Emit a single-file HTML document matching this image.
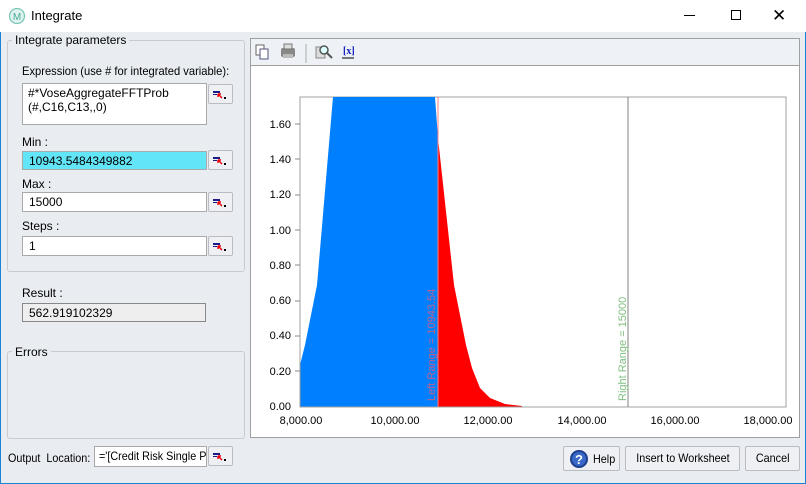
<!DOCTYPE html>
<html><head><meta charset="utf-8"><style>
*{box-sizing:border-box}
body{margin:0;width:806px;height:484px;overflow:hidden;background:#e9edf2;font-family:"Liberation Sans",sans-serif;font-size:12px;color:#000;position:relative}
.a{position:absolute}
.title{left:0;top:0;width:806px;height:32px;background:#fff}
.grp{border:1px solid #c8ccd2;border-radius:3px}
.lg{background:#e9edf2;padding:0 3px}
.inp{background:#fff;border:1px solid #a9a9a9;padding:2px 6px;font-size:12px}
.btn{background:#eef0f3;border:1px solid #b9bdc3;border-radius:2px}
.pb{width:25px;height:20px}
</style></head><body>
<div class="a" style="left:0;top:0;width:1px;height:484px;background:#1883d7"></div>
<div class="a" style="right:0;top:0;width:1px;height:484px;background:#1883d7"></div>
<div class="a" style="left:0;bottom:0;width:806px;height:1px;background:#1883d7"></div>
<div class="a title"></div>
<svg class="a" style="left:8px;top:7px" width="18" height="18"><circle cx="9" cy="9" r="7.5" fill="#dff3f0" stroke="#7cc7b8" stroke-width="1.3"/><text x="9" y="13" font-size="10" text-anchor="middle" fill="#4aa996" font-family="Liberation Sans">M</text></svg>
<div class="a" style="left:31px;top:8px;font-size:13px">Integrate</div>
<div class="a" style="left:684px;top:15px;width:11px;height:1px;background:#000"></div>
<div class="a" style="left:731px;top:10px;width:10px;height:10px;border:1px solid #000"></div>
<div class="a" style="left:772px;top:6px;font-size:17px">✕</div>

<div class="a grp" style="left:7px;top:40px;width:238px;height:232px"></div>
<div class="a lg" style="left:12px;top:33px">Integrate parameters</div>
<div class="a" style="left:22px;top:64px;transform:scaleX(.93);transform-origin:left;white-space:nowrap">Expression (use # for integrated variable):</div>
<div class="a inp" style="left:22px;top:83px;width:185px;height:42px;line-height:14px;padding:2px 5px">#*VoseAggregateFFTProb<br>(#,C16,C13,,0)</div>
<div class="a" style="left:22px;top:135px">Min :</div>
<div class="a inp" style="left:22px;top:151px;width:185px;height:19px;background:#62e6f7">10943.5484349882</div>
<div class="a" style="left:22px;top:177px">Max :</div>
<div class="a inp" style="left:22px;top:192px;width:185px;height:20px">15000</div>
<div class="a" style="left:22px;top:219px">Steps :</div>
<div class="a inp" style="left:22px;top:236px;width:185px;height:20px">1</div>
<div class="a" style="left:22px;top:286px">Result :</div>
<div class="a inp" style="left:22px;top:303px;width:184px;height:19px;background:#eeeeee;border-color:#888">562.919102329</div>
<div class="a grp" style="left:7px;top:351px;width:238px;height:88px"></div>
<div class="a lg" style="left:12px;top:345px">Errors</div>
<div class="a" style="left:8px;top:451px;transform:scaleX(.9);transform-origin:left">Output&nbsp; Location:</div>
<div class="a inp" style="left:94px;top:446px;width:113px;height:21px;padding:2px 4px;white-space:nowrap;overflow:hidden"><span style="display:inline-block;transform:scaleX(.9);transform-origin:left">='[Credit Risk Single P</span></div>

<div class="a btn pb" style="left:208px;top:84px"></div>
<div class="a btn pb" style="left:208px;top:150px"></div>
<div class="a btn pb" style="left:208px;top:192px"></div>
<div class="a btn pb" style="left:208px;top:236px"></div>
<div class="a btn pb" style="left:208px;top:446px"></div>
<svg class="a" style="left:208px;top:0" width="26" height="484">
<g id="ic"><rect x="5" y="91" width="7" height="2" fill="#1a1a8a"/><rect x="5" y="94" width="4" height="1" fill="#1a1a8a"/><path d="M10 94 l4 4 M10 94 v3 M10 94 h3" stroke="#e00" stroke-width="1.4"/><rect x="16" y="97" width="2" height="2" fill="#000"/></g>
<use href="#ic" y="66"/><use href="#ic" y="108"/><use href="#ic" y="152"/><use href="#ic" y="362"/>
</svg>

<div class="a btn" style="left:563px;top:446px;width:57px;height:25px"></div>
<svg class="a" style="left:569px;top:449px" width="20" height="20"><circle cx="10" cy="10" r="9" fill="#1d3f8f"/><circle cx="10" cy="10" r="7" fill="#3a68c6"/><text x="10" y="15" font-size="13" font-weight="bold" fill="#fff" text-anchor="middle" font-family="Liberation Sans">?</text></svg>
<div class="a" style="left:593px;top:452px;transform:scaleX(.9);transform-origin:left">Help</div>
<div class="a btn" style="left:625px;top:446px;width:115px;height:25px;text-align:center;line-height:23px"><span style="display:inline-block;transform:scaleX(.9)">Insert to Worksheet</span></div>
<div class="a btn" style="left:745px;top:446px;width:55px;height:25px;text-align:center;line-height:23px"><span style="display:inline-block;transform:scaleX(.9)">Cancel</span></div>

<div class="a" style="left:250px;top:38px;width:550px;height:400px;border:1px solid #a0a0a0;background:#fff"></div>
<div class="a" style="left:251px;top:39px;width:548px;height:27px;background:#eef1f5;border-bottom:1px solid #a0a0a0"></div>
<svg class="a" style="left:251px;top:39px" width="120" height="27">
<rect x="5" y="6" width="8" height="10" fill="#fff" stroke="#666"/><rect x="9" y="10" width="8" height="10" fill="#fff" stroke="#557"/>
<rect x="30" y="9" width="14" height="9" rx="2" fill="#888"/><rect x="33" y="5" width="8" height="5" fill="#ddd" stroke="#777"/><rect x="32" y="15" width="10" height="4" fill="#bbb"/>
<line x1="55" y1="5" x2="55" y2="24" stroke="#aaa"/>
<rect x="65" y="8" width="9" height="11" fill="#ddd" stroke="#888"/><circle cx="73" cy="11" r="4" fill="#dff" stroke="#555" stroke-width="1.5"/><line x1="76" y1="14" x2="81" y2="19" stroke="#555" stroke-width="2"/>
<text x="92" y="15" font-size="10" font-weight="bold" fill="#1020c0" font-family="Liberation Serif">[x]</text><line x1="91" y1="19" x2="103" y2="19" stroke="#000"/>
</svg>
<svg class="a" style="left:0;top:0" width="806" height="484" font-family="Liberation Sans" font-size="11">
<rect x="300" y="97" width="486" height="310" fill="#fff" stroke="#a0a0a0"/>
<polygon points="300,407 300,365 305,345 317,285 333,97 435,97 438,138 438,407" fill="#0080ff"/>
<polygon points="438,138 454,285 466,345 472,368 480,388 490,398 505,404 522,406 522,407 438,407" fill="#ff0000"/>
<line x1="438" y1="97" x2="438" y2="407" stroke="#ff8080"/>
<line x1="628" y1="97" x2="628" y2="407" stroke="#808080"/>
<line x1="300" y1="97" x2="300" y2="407" stroke="#a0a0a0"/>
<line x1="300" y1="407" x2="786" y2="407" stroke="#a0a0a0"/>
<g fill="#000" text-anchor="end">
<text x="291" y="128">1.60</text><text x="291" y="163">1.40</text><text x="291" y="198">1.20</text><text x="291" y="234">1.00</text><text x="291" y="269">0.80</text><text x="291" y="304">0.60</text><text x="291" y="339">0.40</text><text x="291" y="375">0.20</text><text x="291" y="410">0.00</text>
</g>
<g stroke="#888"><line x1="295" y1="124" x2="300" y2="124"/><line x1="295" y1="159" x2="300" y2="159"/><line x1="295" y1="195" x2="300" y2="195"/><line x1="295" y1="230" x2="300" y2="230"/><line x1="295" y1="265" x2="300" y2="265"/><line x1="295" y1="301" x2="300" y2="301"/><line x1="295" y1="336" x2="300" y2="336"/><line x1="295" y1="371" x2="300" y2="371"/></g>
<g text-anchor="middle"><text x="301" y="424">8,000.00</text><text x="395" y="424">10,000.00</text><text x="488" y="424">12,000.00</text><text x="582" y="424">14,000.00</text><text x="675" y="424">16,000.00</text><text x="768" y="424">18,000.00</text></g>
<text transform="translate(435,401) rotate(-90)" fill="#c06090">Left Range = 10943.54</text>
<text transform="translate(626,401) rotate(-90)" fill="#80c080">Right Range = 15000</text>
</svg>
</body></html>
